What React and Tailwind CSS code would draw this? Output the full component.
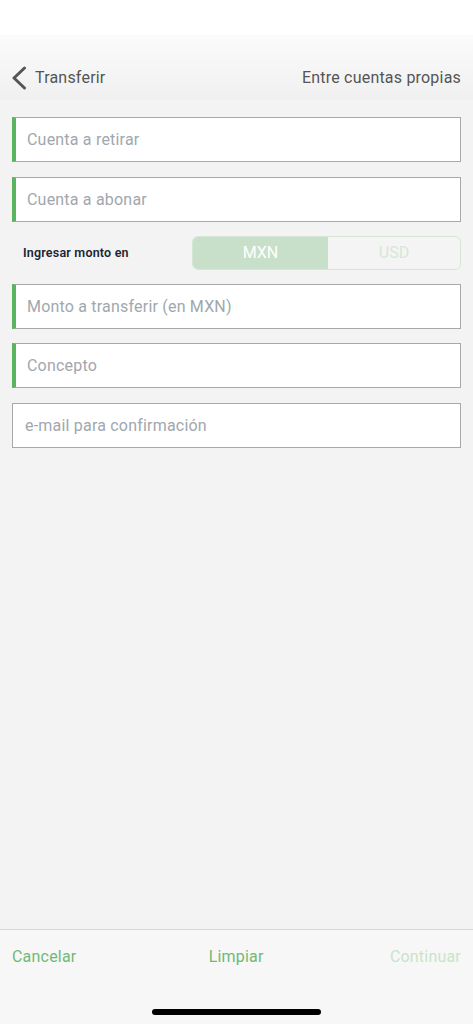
import React from "react";

const font = { fontFamily: "Roboto, 'Liberation Sans', sans-serif" };

function Field({ label, green = true, className = "" }) {
  return (
    <div
      className={`h-[45px] bg-white border border-[#a8a8a8] flex items-center ${
        green ? "border-l-[4px] border-l-[#5cb360] pl-[11px]" : "pl-[12px]"
      } ${className}`}
    >
      <span className="text-[16px] text-[#a1a7ae] tracking-[0.2px]">{label}</span>
    </div>
  );
}

export default function App() {
  return (
    <div className="w-[473px] h-[1024px] bg-[#f3f3f3] flex flex-col" style={font}>
      <div className="h-[35px] bg-white shrink-0" />
      <div className="h-[65px] shrink-0 bg-gradient-to-b from-[#fbfbfb] to-[#f0f0f0] flex items-center justify-between pl-[11px] pr-[12px] pt-[21px]">
        <div className="flex items-center gap-[8px]">
          <svg width="16" height="24" viewBox="0 0 16 24" fill="none">
            <path d="M13.5 2 L3 12 L13.5 22" stroke="#555" strokeWidth="3" strokeLinecap="round" strokeLinejoin="round" />
          </svg>
          <span className="text-[16px] text-[#555] tracking-[0.2px]">Transferir</span>
        </div>
        <span className="text-[16px] text-[#555] tracking-[0.2px]">Entre cuentas propias</span>
      </div>
      <div className="flex flex-col px-[12px] pt-[17px]">
        <Field label="Cuenta a retirar" />
        <Field label="Cuenta a abonar" className="mt-[15px]" />
        <div className="flex items-center justify-between h-[34px] mt-[14px]">
          <span className="pl-[11px] text-[12.5px] font-semibold text-[#1c2534] tracking-[0.2px]">Ingresar monto en</span>
          <div className="w-[269px] h-[34px] rounded-[6px] border border-[#d3e7d4] flex overflow-hidden">
            <div className="w-[135px] bg-[#c8dfca] flex items-center justify-center text-[16px] text-white">MXN</div>
            <div className="flex-1 bg-[#f4f4f4] flex items-center justify-center text-[16px] text-[#d5e8d6]">USD</div>
          </div>
        </div>
        <Field label="Monto a transferir (en MXN)" className="mt-[14px]" />
        <Field label="Concepto" className="mt-[14px]" />
        <Field label="e-mail para confirmación" green={false} className="mt-[15px]" />
      </div>
      <div className="flex-1" />
      <div className="h-[95px] shrink-0 bg-[#f7f7f7] border-t border-[#d6d6d6] flex flex-col">
        <div className="flex items-center justify-between px-[12px] h-[54px]">
          <span className="text-[16px] text-[#72b975] tracking-[0.2px]">Cancelar</span>
          <span className="text-[16px] text-[#72b975] tracking-[0.2px] ml-[6px]">Limpiar</span>
          <span className="text-[16px] text-[#c9e4ca] tracking-[0.2px]">Continuar</span>
        </div>
        <div className="flex-1 flex justify-center items-end pb-[9px]">
          <div className="w-[169px] h-[6px] rounded-full bg-black" />
        </div>
      </div>
    </div>
  );
}
